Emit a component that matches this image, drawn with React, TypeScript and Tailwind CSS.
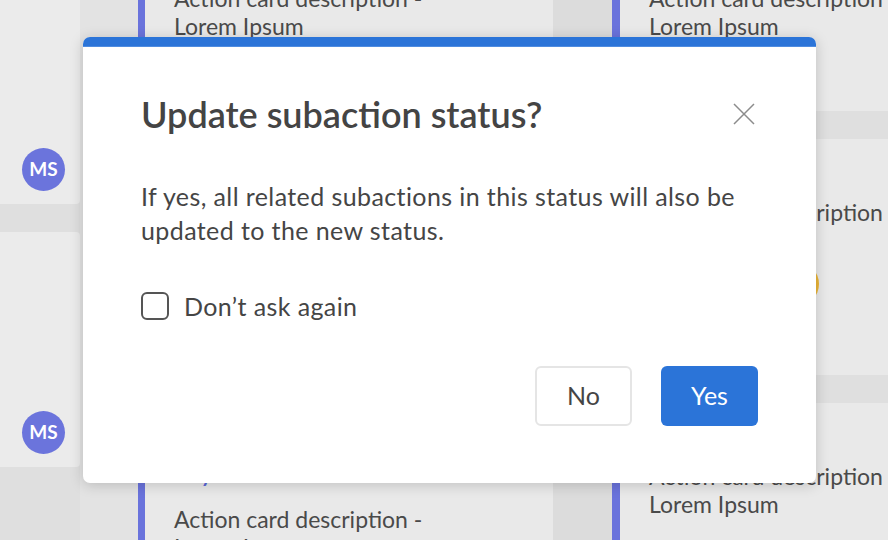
export default function App() {
  return (
    <div className="relative w-[888px] h-[540px] overflow-hidden bg-[#dfdfdf] font-['Lato',sans-serif] text-[#454545]">
      {/* board behind the dialog */}
      <div className="flex h-full">
        <div className="w-[80px] shrink-0 flex flex-col gap-[28px] -mt-[40px]">
          <div className="h-[244px] bg-[#ebebeb] rounded-r-[4px] flex items-end pb-[13px] pl-[22px]">
            <Avatar />
          </div>
          <div className="h-[235px] bg-[#ebebeb] rounded-r-[4px] flex items-end pb-[13px] pl-[22px]">
            <Avatar />
          </div>
        </div>

        <div className="w-[58px] shrink-0 bg-[#e3e3e3]" />

        <div className="w-[415px] shrink-0 flex flex-col gap-[28px] -mt-[40px]">
          <div className="h-[300px] shrink-0 bg-[#e9e9e9] border-l-[7px] border-[#6a73dc] pl-[29px] pt-[24px] text-[23px] leading-[28px] text-[#4a4a4a]">
            <p>Action card description -</p>
            <p>Lorem Ipsum</p>
          </div>
          <div className="h-[300px] shrink-0 bg-[#e9e9e9] border-l-[7px] border-[#6a73dc] pl-[29px] pt-[171px] text-[23px] leading-[28px] text-[#4a4a4a]">
            <p className="font-semibold text-[#5a66d8] mb-[18px]">Key action</p>
            <p>Action card description -</p>
            <p>Lorem Ipsum</p>
          </div>
        </div>

        <div className="w-[59px] shrink-0 bg-[#dcdcdc]" />

        <div className="flex-1 flex flex-col gap-[28px] -mt-[40px]">
          <div className="h-[151px] shrink-0 bg-[#e9e9e9] border-l-[8px] border-[#6a73dc] pl-[29px] pt-[24px] text-[23px] leading-[28px] text-[#4a4a4a]">
            <p>Action card description</p>
            <p>Lorem Ipsum</p>
          </div>
          <div className="h-[236px] shrink-0 bg-[#e9e9e9] border-l-[8px] border-[#6a73dc] pl-[29px] pt-[59px] text-[23px] leading-[28px] text-[#4a4a4a]">
            <p>Action card description</p>
            <div className="mt-[36px] ml-[126px] w-[44px] h-[44px] rounded-full bg-[#ebb537]" />
          </div>
          <div className="h-[200px] shrink-0 bg-[#e9e9e9] border-l-[8px] border-[#6a73dc] pl-[29px] pt-[59px] text-[23px] leading-[28px] text-[#4a4a4a]">
            <p>Action card description</p>
            <p>Lorem Ipsum</p>
          </div>
        </div>
      </div>

      {/* dialog */}
      <div className="absolute left-[83px] top-[37px] w-[733px] h-[446px] bg-white rounded-[7px] overflow-hidden shadow-[0_2px_14px_rgba(0,0,0,0.18)]">
        <div className="h-[10px] bg-[#2b74d8] border-b border-[#4f8ce0]" />
        <div className="px-[58px] pt-[47px]">
          <div className="flex items-center justify-between">
            <h2 className="text-[36px] leading-[40px] font-semibold text-[#444]">Update subaction status?</h2>
            <button className="mr-[3px] w-[22px] h-[22px]">
              <svg viewBox="0 0 22 22" width="22" height="22" fill="none" stroke="#8c8c8c" strokeWidth="1.5">
                <path d="M1 1 L21 21 M21 1 L1 21" />
              </svg>
            </button>
          </div>
          <p className="mt-[45px] text-[25px] tracking-[0.4px] leading-[34px] text-[#454545]">
            If yes, all related subactions in this status will also be
            <br />
            updated to the new status.
          </p>
          <label className="mt-[45px] flex items-center gap-[15px] h-[28px]">
            <span className="w-[28px] h-[28px] rounded-[6px] border-2 border-[#555]" />
            <span className="text-[25px] tracking-[0.4px] leading-[28px]">Don’t ask again</span>
          </label>
          <div className="mt-[46px] flex justify-end gap-[29px]">
            <button className="w-[97px] h-[60px] rounded-[6px] border-2 border-[#e5e5e5] bg-white text-[25px] text-[#454545]">
              No
            </button>
            <button className="w-[97px] h-[60px] rounded-[6px] bg-[#2b74d8] text-[25px] text-white">
              Yes
            </button>
          </div>
        </div>
      </div>
    </div>
  );
}

function Avatar() {
  return (
    <div className="w-[43px] h-[43px] rounded-full bg-[#6b74dc] flex items-center justify-center text-white text-[19px] font-bold font-['Lato',sans-serif]">
      MS
    </div>
  );
}
